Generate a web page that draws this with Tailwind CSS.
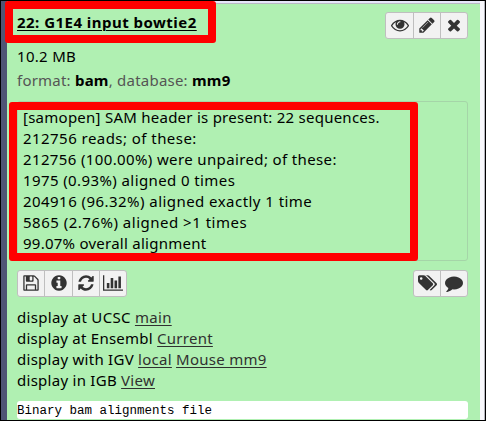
<!DOCTYPE html>
<html lang="en">
<head>
<meta charset="utf-8">
<title>History dataset</title>
<script src="https://cdn.jsdelivr.net/npm/@tailwindcss/browser@4"></script>
</head>
<body class="w-[486px] h-[421px] overflow-hidden bg-black">
<div class="relative flex w-[486px] h-[421px] border border-black overflow-hidden font-['Noto_Sans','Open_Sans',sans-serif] text-[15px] leading-[21px] text-black">
  <div class="w-[6px] shrink-0 bg-[#4f5575]"></div>
  <div class="flex w-[473px] shrink-0 flex-col border-t-2 border-[#e6e6fa] bg-[#b0f0b2]">
    <div class="h-px w-full shrink-0 bg-[#b9b9c4]"></div>
    <div class="flex h-[42px] shrink-0 items-start justify-between pl-[10px] pr-[12px] pt-[8px]">
      <a class="whitespace-nowrap font-bold tracking-[0.47px] underline decoration-1 underline-offset-2">22: G1E4 input bowtie2</a>
      <div class="flex h-[27px] w-[83px] divide-x divide-[#bfbfbf] rounded-[3px] border border-[#bfbfbf] bg-[#f2f2f2] fill-[#333]">
        <span class="flex w-[28px] items-center justify-center pb-px"><svg class="size-[18px]" viewBox="0 0 1792 1792"><path d="M1664 960q-152-236-381-353 61 104 61 225 0 185-131.5 316.5t-316.5 131.5-316.5-131.5-131.5-316.5q0-121 61-225-229 117-381 353 133 205 333.5 326.5t434.5 121.5 434.5-121.5 333.5-326.5zm-720-384q0-20-14-34t-34-14q-125 0-214.5 89.5t-89.5 214.5q0 20 14 34t34 14 34-14 14-34q0-86 61-147t147-61q20 0 34-14t14-34zm848 384q0 34-20 69-140 230-376.5 368.5t-499.5 138.5-499.5-139-376.5-368q-20-35-20-69t20-69q140-229 376.5-368t499.5-139 499.5 139 376.5 368q20 35 20 69z"/></svg></span>
        <span class="flex w-[27px] items-center justify-center pb-px"><svg class="size-[18px]" viewBox="0 0 1792 1792"><path d="M491 1536l91-91-235-235-91 91v107h128v128h107zm523-928q0-22-22-22-10 0-17 7l-542 542q-7 7-7 17 0 22 22 22 10 0 17-7l542-542q7-7 7-17zm-54-192l416 416-832 832h-416v-416zm683 96q0 53-37 90l-166 166-416-416 166-165q36-38 90-38 53 0 91 38l235 234q37 39 37 91z"/></svg></span>
        <span class="flex flex-1 items-center justify-center pb-[2px]"><svg class="size-[18px]" viewBox="0 0 1792 1792"><path d="M1490 1322q0 40-28 68l-136 136q-28 28-68 28t-68-28l-294-294-294 294q-28 28-68 28t-68-28l-136-136q-28-28-28-68t28-68l294-294-294-294q-28-28-28-68t28-68l136-136q28-28 68-28t68 28l294 294 294-294q28-28 68-28t68 28l136 136q28 28 28 68t-28 68l-294 294 294 294q28 28 28 68z"/></svg></span>
      </div>
    </div>
    <div class="h-[55px] shrink-0 whitespace-nowrap pl-[10px]">
      <div class="h-[24px] tracking-[0.3px]">10.2 MB</div>
      <div class="tracking-[0.22px] text-[#555]">format: <b class="text-black">bam</b>, database: <b class="text-black">mm9</b></div>
    </div>
    <div class="ml-[10px] h-[160px] w-[451px] shrink-0 whitespace-nowrap rounded-[3px] border border-[#a5d5a8] pl-[5px] pt-[5px]">
      <div class="tracking-[0.25px]">[samopen] SAM header is present: 22 sequences.</div>
      <div class="tracking-[0.45px]">212756 reads; of these:</div>
      <div class="tracking-[0.37px]">212756 (100.00%) were unpaired; of these:</div>
      <div class="tracking-[0.4px]">1975 (0.93%) aligned 0 times</div>
      <div class="tracking-[0.45px]">204916 (96.32%) aligned exactly 1 time</div>
      <div class="tracking-[0.5px]">5865 (2.76%) aligned &gt;1 times</div>
      <div class="tracking-[0.25px]">99.07% overall alignment</div>
    </div>
    <div class="mt-[9px] flex h-[27px] shrink-0 justify-between pl-[10px] pr-[12px]">
      <div class="flex w-[110px] divide-x divide-[#bfbfbf] rounded-[3px] border border-[#bfbfbf] bg-[#f2f2f2] fill-[#333]">
        <span class="flex w-[27px] items-center justify-center pb-[2px]"><svg class="size-[18px]" viewBox="0 0 1792 1792"><path d="M512 1536h768v-384h-768v384zm896 0h128v-896q0-14-10-38.5t-20-34.5l-281-281q-10-10-34-20t-39-10v416q0 40-28 68t-68 28h-576q-40 0-68-28t-28-68v-416h-128v1280h128v-416q0-40 28-68t68-28h832q40 0 68 28t28 68v416zm-384-928v-320q0-13-9.5-22.5t-22.5-9.5h-192q-13 0-22.5 9.5t-9.5 22.5v320q0 13 9.5 22.5t22.5 9.5h192q13 0 22.5-9.5t9.5-22.5zm640 32v928q0 40-28 68t-68 28h-1344q-40 0-68-28t-28-68v-1344q0-40 28-68t68-28h928q40 0 88 20t76 48l280 280q28 28 48 76t20 88z"/></svg></span>
        <span class="flex w-[28px] items-center justify-center pb-[2px]"><svg class="size-[18px]" viewBox="0 0 1792 1792"><path d="M1152 1376v-160q0-14-9-23t-23-9h-96v-512q0-14-9-23t-23-9h-320q-14 0-23 9t-9 23v160q0 14 9 23t23 9h96v320h-96q-14 0-23 9t-9 23v160q0 14 9 23t23 9h448q14 0 23-9t9-23zm-128-896v-160q0-14-9-23t-23-9h-192q-14 0-23 9t-9 23v160q0 14 9 23t23 9h192q14 0 23-9t9-23zm640 416q0 209-103 385.5t-279.5 279.5-385.5 103-385.5-103-279.5-279.5-103-385.5 103-385.5 279.5-279.5 385.5-103 385.5 103 279.5 279.5 103 385.5z"/></svg></span>
        <span class="flex w-[27px] items-center justify-center pb-[2px]"><svg class="size-[18px]" viewBox="0 0 1792 1792"><path d="M1639 1056q0 5-1 7-64 268-268 434.5t-478 166.5q-146 0-282.5-55t-243.5-157l-129 129q-19 19-45 19t-45-19-19-45v-448q0-26 19-45t45-19h448q26 0 45 19t19 45-19 45l-137 137q71 66 161 102t187 36q134 0 250-65t186-179q11-17 53-117 8-23 30-23h192q13 0 22.5 9.5t9.5 22.5zm25-800v448q0 26-19 45t-45 19h-448q-26 0-45-19t-19-45 19-45l138-138q-148-137-349-137-134 0-250 65t-186 179q-11 17-53 117-8 23-30 23h-199q-13 0-22.5-9.5t-9.5-22.5v-7q65-268 270-434.5t480-166.5q146 0 284 55.5t245 156.5l130-129q19-19 45-19t45 19 19 45z"/></svg></span>
        <span class="flex flex-1 items-center justify-center pb-[2px]"><svg class="h-[18px] w-[20.5px]" viewBox="0 0 2048 1792"><path d="M640 896v512h-256v-512h256zm384-512v1024h-256v-1024h256zm1024 1152v128h-2048v-1536h128v1408h1920zm-640-896v768h-256v-768h256zm384-384v1152h-256v-1152h256z"/></svg></span>
      </div>
      <div class="flex w-[55px] divide-x divide-[#bfbfbf] rounded-[3px] border border-[#bfbfbf] bg-[#f2f2f2] fill-[#333]">
        <span class="flex w-[27px] items-center justify-center pb-[2px]"><svg class="h-[18px] w-[19px]" viewBox="0 0 1899 1792"><path d="M448 448q0-53-37.500-90.500t-90.500-37.500-90.500 37.500-37.500 90.500 37.500 90.500 90.500 37.500 90.500-37.500 37.500-90.500zm1067 576q0 53-37 90l-491 492q-39 37-91 37-53 0-90-37l-715-716q-38-37-64.500-101t-26.500-117v-416q0-52 38-90t90-38h416q53 0 117 26.500t102 64.500l715 714q37 39 37 91zm384 0q0 53-37 90l-491 492q-39 37-91 37-36 0-59-14t-53-45l470-470q37-37 37-90 0-52-37-91l-715-714q-38-38-102-64.500t-117-26.500h224q53 0 117 26.500t102 64.500l715 714q37 39 37 91z"/></svg></span>
        <span class="flex flex-1 items-center justify-center pb-[2px]"><svg class="size-[18px]" viewBox="0 0 1792 1792"><path d="M1792 896q0 174-120 321.500t-326 233-450 85.500q-70 0-145-8-198 175-460 242-49 14-114 22-17 2-30.500-9t-17.500-29v-1q-3-4-.5-12t2-10 4.500-9.500l6-9 7-8.500 8-9q7-8 31-34.500t34.500-38 31-39.500 32.500-51 27-59 26-76q-157-89-247.500-220t-90.500-281q0-174 120-321.500t326-233 450-85.500 450 85.500 326 233 120 321.500z"/></svg></span>
      </div>
    </div>
    <div class="mt-[10px] h-[94px] shrink-0 whitespace-nowrap pl-[10px]">
      <div class="tracking-[0.3px]">display at UCSC <a class="text-[#303030] underline decoration-1 underline-offset-2">main</a></div>
      <div class="tracking-[0.25px]">display at Ensembl <a class="text-[#303030] underline decoration-1 underline-offset-2">Current</a></div>
      <div class="tracking-[0.27px]">display with IGV <a class="text-[#303030] underline decoration-1 underline-offset-2">local</a> <a class="text-[#303030] underline decoration-1 underline-offset-2">Mouse mm9</a></div>
      <div class="tracking-[0.27px]">display in IGB <a class="text-[#303030] underline decoration-1 underline-offset-2">View</a></div>
    </div>
    <div class="ml-[10px] h-[18px] w-[451px] shrink-0 whitespace-nowrap rounded-[3px] bg-white font-['Liberation_Mono',monospace] text-[12.5px] leading-[20px]">Binary bam alignments file</div>
  </div>
  <div class="flex-1 border-r border-[#b5b5bd] bg-[#f8f8fc]"></div>
  <div class="absolute left-[4px] top-0 h-[42px] w-[211px] rounded-[3px] border-8 border-[#ff0000]"></div>
  <div class="absolute left-[8px] top-[101px] h-[159px] w-[409px] rounded-[3px] border-8 border-[#ff0000]"></div>
</div>
</body>
</html>
